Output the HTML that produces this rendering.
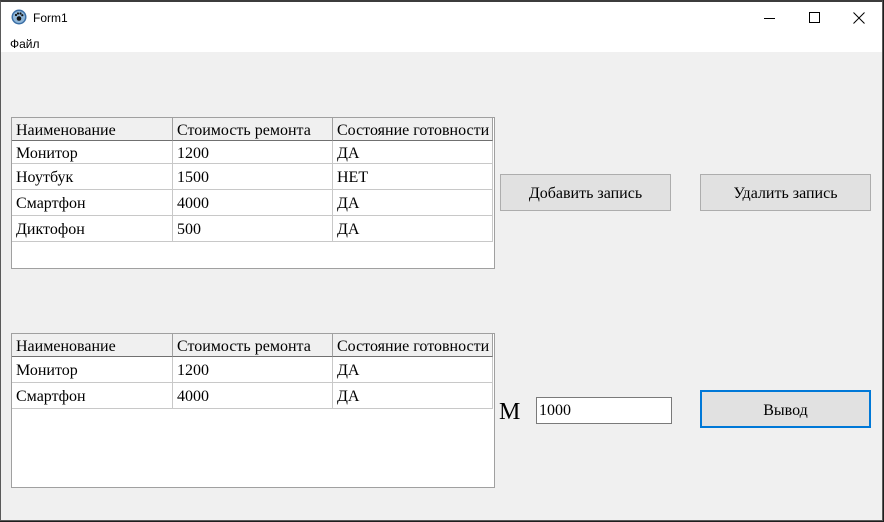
<!DOCTYPE html>
<html><head><meta charset="utf-8"><style>
*{margin:0;padding:0;box-sizing:border-box}
body{width:884px;height:522px;background:#1e1e1e;position:relative;overflow:hidden;font-family:"Liberation Serif",serif;}
.win{position:absolute;left:0;top:0;width:883px;height:521px;background:#f0f0f0;border:1px solid #5a5a5a;border-top:2px solid #3c3c3c}
.title{position:absolute;left:0;top:0;width:100%;height:32px;background:#fff;font-family:"Liberation Sans",sans-serif;font-size:12px}
.menu{position:absolute;left:0;top:32px;width:100%;height:18px;background:#fff;font-family:"Liberation Sans",sans-serif;font-size:12px}
.a{position:absolute}
.grid{position:absolute;background:#fff;border:1px solid #a0a0a0}
.c{position:absolute;font-size:16px;line-height:25px;padding-left:4px;color:#000;white-space:nowrap;overflow:hidden}
.h{background:#f0f0f0;border-right:1px solid #a0a0a0;border-bottom:1px solid #707070}
.r{border-right:1px solid #c8c8c8;border-bottom:1px solid #c8c8c8}
.btn{position:absolute;background:#e1e1e1;border:1px solid #adadad;font-size:16px;text-align:center}
</style></head><body>
<div class="win">
 <div class="title">
  <svg class="a" style="left:10px;top:7px" width="16" height="16" viewBox="0 0 16 16"><circle cx="8" cy="8" r="7.5" fill="#3a6ea5"/><circle cx="8" cy="8" r="6" fill="#8fb6d8"/><circle cx="8" cy="9.5" r="2.3" fill="#111"/><circle cx="5" cy="6" r="1.1" fill="#111"/><circle cx="7" cy="4.5" r="1.1" fill="#111"/><circle cx="9.5" cy="4.5" r="1.1" fill="#111"/><circle cx="11.3" cy="6.2" r="1.1" fill="#111"/></svg>
  <div class="a" style="left:32px;top:9px">Form1</div>
  <div class="a" style="left:763px;top:16px;width:11px;height:1px;background:#000"></div>
  <div class="a" style="left:808px;top:10px;width:11px;height:11px;border:1px solid #000"></div>
  <svg class="a" style="left:852px;top:10px" width="12" height="12"><path d="M0.5 0.5L11.5 11.5M11.5 0.5L0.5 11.5" stroke="#000" stroke-width="1"/></svg>
 </div>
 <div class="menu"><div class="a" style="left:9px;top:3px">Файл</div></div>

 <div class="grid" style="left:10px;top:115px;width:484px;height:152px">
  <div class="c h" style="left:0;top:0;width:161px;height:23px">Наименование</div>
  <div class="c h" style="left:161px;top:0;width:160px;height:23px">Стоимость ремонта</div>
  <div class="c h" style="left:321px;top:0;width:160px;height:23px">Состояние готовности</div>
  <div class="c r" style="left:0;top:23px;width:161px;height:23px">Монитор</div>
  <div class="c r" style="left:161px;top:23px;width:160px;height:23px">1200</div>
  <div class="c r" style="left:321px;top:23px;width:160px;height:23px">ДА</div>
  <div class="c r" style="left:0;top:46px;width:161px;height:26px;line-height:27px">Ноутбук</div>
  <div class="c r" style="left:161px;top:46px;width:160px;height:26px;line-height:27px">1500</div>
  <div class="c r" style="left:321px;top:46px;width:160px;height:26px;line-height:27px">НЕТ</div>
  <div class="c r" style="left:0;top:72px;width:161px;height:26px;line-height:27px">Смартфон</div>
  <div class="c r" style="left:161px;top:72px;width:160px;height:26px;line-height:27px">4000</div>
  <div class="c r" style="left:321px;top:72px;width:160px;height:26px;line-height:27px">ДА</div>
  <div class="c r" style="left:0;top:98px;width:161px;height:26px;line-height:27px">Диктофон</div>
  <div class="c r" style="left:161px;top:98px;width:160px;height:26px;line-height:27px">500</div>
  <div class="c r" style="left:321px;top:98px;width:160px;height:26px;line-height:27px">ДА</div>
 </div>

 <div class="grid" style="left:10px;top:331px;width:484px;height:155px">
  <div class="c h" style="left:0;top:0;width:161px;height:23px">Наименование</div>
  <div class="c h" style="left:161px;top:0;width:160px;height:23px">Стоимость ремонта</div>
  <div class="c h" style="left:321px;top:0;width:160px;height:23px">Состояние готовности</div>
  <div class="c r" style="left:0;top:23px;width:161px;height:26px;line-height:27px">Монитор</div>
  <div class="c r" style="left:161px;top:23px;width:160px;height:26px;line-height:27px">1200</div>
  <div class="c r" style="left:321px;top:23px;width:160px;height:26px;line-height:27px">ДА</div>
  <div class="c r" style="left:0;top:49px;width:161px;height:26px;line-height:27px">Смартфон</div>
  <div class="c r" style="left:161px;top:49px;width:160px;height:26px;line-height:27px">4000</div>
  <div class="c r" style="left:321px;top:49px;width:160px;height:26px;line-height:27px">ДА</div>
 </div>

 <div class="btn" style="left:499px;top:172px;width:171px;height:37px;line-height:38px">Добавить запись</div>
 <div class="btn" style="left:699px;top:172px;width:171px;height:37px;line-height:38px">Удалить запись</div>
 <div class="btn" style="left:699px;top:388px;width:171px;height:38px;line-height:37px;border:2px solid #0078d7">Вывод</div>
 <div class="a" style="left:498px;top:396px;font-size:24px;line-height:28px">M</div>
 <div class="a" style="left:535px;top:395px;width:136px;height:27px;background:#fff;border:1px solid #7a7a7a;font-size:16px;line-height:26px;padding-left:2px">1000</div>
</div>
</body></html>
